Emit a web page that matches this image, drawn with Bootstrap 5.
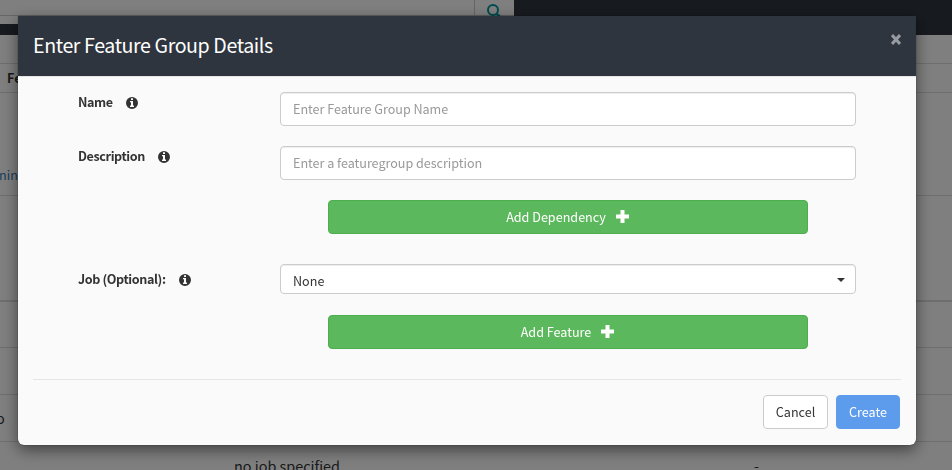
<!DOCTYPE html>
<html lang="en">
<head>
<meta charset="utf-8">
<meta name="viewport" content="width=device-width, initial-scale=1">
<title>Enter Feature Group Details</title>
<link href="https://cdn.jsdelivr.net/npm/bootstrap@5.3.0/dist/css/bootstrap.min.css" rel="stylesheet">
<style>
html,body{height:100%;overflow:hidden}
body{font-family:"Noto Sans CJK SC","Noto Sans CJK JP",sans-serif;font-size:12.6px;line-height:20px;color:#333;background:#fff}
.page-bar{height:35px;background:#2f353e}
.search-wrap{width:514px;height:24px;background:#fff}
.search-box{height:16px;border:solid #ccc;border-width:0 1px 1px 0;width:475px}
.search-go{width:39px;height:16px;border-bottom:1px solid #ccc}
.grid-line{border-bottom:1px solid #ddd}
.line-thick{border-bottom-width:2px}
.strip{height:29px}
.r1{height:103px}.r2{height:106px}.r3{height:46px}.r4,.r5{height:47px}
.r6{height:29px;font-size:14.4px;line-height:47px}
.bg-head{line-height:28px;padding-left:7px}
.bg-link{color:#337ab7;padding-top:72px;font-size:12.6px;margin-left:-1px}
.bg-cell{font-size:14.4px;text-indent:-4px}
.job-cell{width:234px}
.text-cell{width:520px}
.shade{background:rgba(0,0,0,.5)}
.dlg{width:898px;max-width:none;margin:16px 0 0 18px}
.dlg .modal-content{height:429px;background:#fafafa;border:0;border-radius:0 0 6px 6px;box-shadow:0 5px 15px rgba(0,0,0,.5),0 0 1px rgba(0,0,0,.8);color:#333}
.dlg .modal-header{height:61px;background:#2f353e;border-bottom:1px solid #e5e5e5;border-radius:0;padding:0 15px}
.dlg .modal-title{font-size:19.6px;line-height:28px;font-weight:400;letter-spacing:-.4px;color:#fff;margin-top:-2px}
.x-btn{line-height:0;color:#989ba0;margin-top:-13px}
.dlg .modal-body{flex:none;height:302px;padding:15px 60px 0}
.lbl{width:202px;font-weight:700;font-size:12.6px;letter-spacing:-.4px;line-height:20px}
.lbl svg{margin-left:13px;margin-top:-2px}
.dlg .form-control{font-size:12.6px;line-height:20px;height:34px;padding:5px 12px 7px;border:1px solid #ccc;border-radius:4px;box-shadow:inset 0 1px 1px rgba(0,0,0,.075);color:#333;background-color:#fff}
.dlg .form-control::placeholder{color:#999;opacity:1;letter-spacing:-.03px}
.dlg .pick{height:30px;padding:6px 10px 0 12px}
.pick svg{margin-top:7px}
.field-row{height:34px;margin-bottom:20px}
.job-row{height:30px;margin:30px 0 21px}
.job-row .lbl{padding-top:5px}
.add-btn{width:480px;height:34px;margin-left:250px;background:#5cb85c;border:1px solid #4cae4c;border-radius:4px;color:#fff;font-size:12.6px;line-height:20px;padding:0 1px 0 0}
.add-btn svg{margin-left:10px;margin-top:-1px}
.dlg .modal-footer{margin:0 15px;border-top:1px solid #e5e5e5;padding:15px 1px 0;gap:8px;height:66px;align-items:flex-start}
.dlg .modal-footer .btn{margin:0;height:34px;font-size:12.6px;line-height:20px;padding:6px 0;border-radius:4px}
.cancel{background:#fff;border:1px solid #ccc;color:#333;width:65px}
.create{background:#5d9cec;border:1px solid #5d9cec;color:#fff;width:64px}
</style>
</head>
<body>
<svg class="d-none">
  <symbol id="info" viewBox="0 0 12 12"><path fill="#333" fill-rule="evenodd" d="M6 0a6 6 0 1 1 0 12A6 6 0 0 1 6 0ZM5 1.200v1.800h2V1.200ZM4 4v1.200h1V8.600H4V10h4V8.600H7V4Z"/></symbol>
  <symbol id="plus" viewBox="0 0 13 13"><path fill="#fff" d="M4.500 0h4v4.500H13v4H8.500V13h-4V8.500H0v-4h4.500Z"/></symbol>
</svg>

<div class="vh-100 overflow-hidden">
  <div class="page-bar">
    <div class="search-wrap d-flex">
      <div class="search-box"></div>
      <div class="search-go d-flex justify-content-center pt-1">
        <svg width="16" height="16" viewBox="0 0 16 16" fill="none" stroke="#00979d"><circle cx="6" cy="6" r="5" stroke-width="2"/><path d="M9.800 9.800l3.700 3.700" stroke-width="2.600"/></svg>
      </div>
    </div>
  </div>
  <div class="grid-line strip"></div>
  <div class="grid-line strip"><div class="bg-head fw-bold">Feature</div></div>
  <div class="grid-line r1"><div class="bg-link">ning</div></div>
  <div class="grid-line line-thick r2"></div>
  <div class="grid-line r3"></div>
  <div class="grid-line r4"></div>
  <div class="grid-line r5 d-flex align-items-center bg-cell"><span class="d-block">o</span></div>
  <div class="r6 d-flex"><div class="job-cell"></div><div class="text-cell">no job specified</div><div>-</div></div>
</div>

<div class="modal d-block shade overflow-hidden" tabindex="-1">
  <div class="modal-dialog dlg">
    <div class="modal-content">
      <div class="modal-header">
        <h5 class="modal-title">Enter Feature Group Details</h5>
        <button class="btn p-0 border-0 x-btn" aria-label="Close"><svg width="10" height="11" viewBox="0 0 10 11" stroke="currentColor" stroke-width="3"><path d="M1 1l8 9M9 1l-8 9"/></svg></button>
      </div>
      <div class="modal-body">
        <div class="d-flex field-row"><label class="lbl">Name<svg width="12" height="12"><use href="#info"/></svg></label><input class="form-control flex-fill w-auto" placeholder="Enter Feature Group Name"></div>
        <div class="d-flex field-row"><label class="lbl">Description<svg width="12" height="12"><use href="#info"/></svg></label><input class="form-control flex-fill w-auto" placeholder="Enter a featuregroup description"></div>
        <button class="btn d-flex align-items-center justify-content-center add-btn">Add Dependency<svg width="13" height="13"><use href="#plus"/></svg></button>
        <div class="d-flex job-row"><label class="lbl">Job (Optional):<svg width="12" height="12"><use href="#info"/></svg></label>
          <div class="form-control pick d-flex justify-content-between flex-fill w-auto"><span>None</span><svg width="8" height="4"><path fill="#333" d="M0 0h8L4 4Z"/></svg></div>
        </div>
        <button class="btn d-flex align-items-center justify-content-center add-btn">Add Feature<svg width="13" height="13"><use href="#plus"/></svg></button>
      </div>
      <div class="modal-footer">
        <button class="btn cancel">Cancel</button>
        <button class="btn create">Create</button>
      </div>
    </div>
  </div>
</div>
<script src="https://cdn.jsdelivr.net/npm/bootstrap@5.3.0/dist/js/bootstrap.bundle.min.js"></script>
</body>
</html>
